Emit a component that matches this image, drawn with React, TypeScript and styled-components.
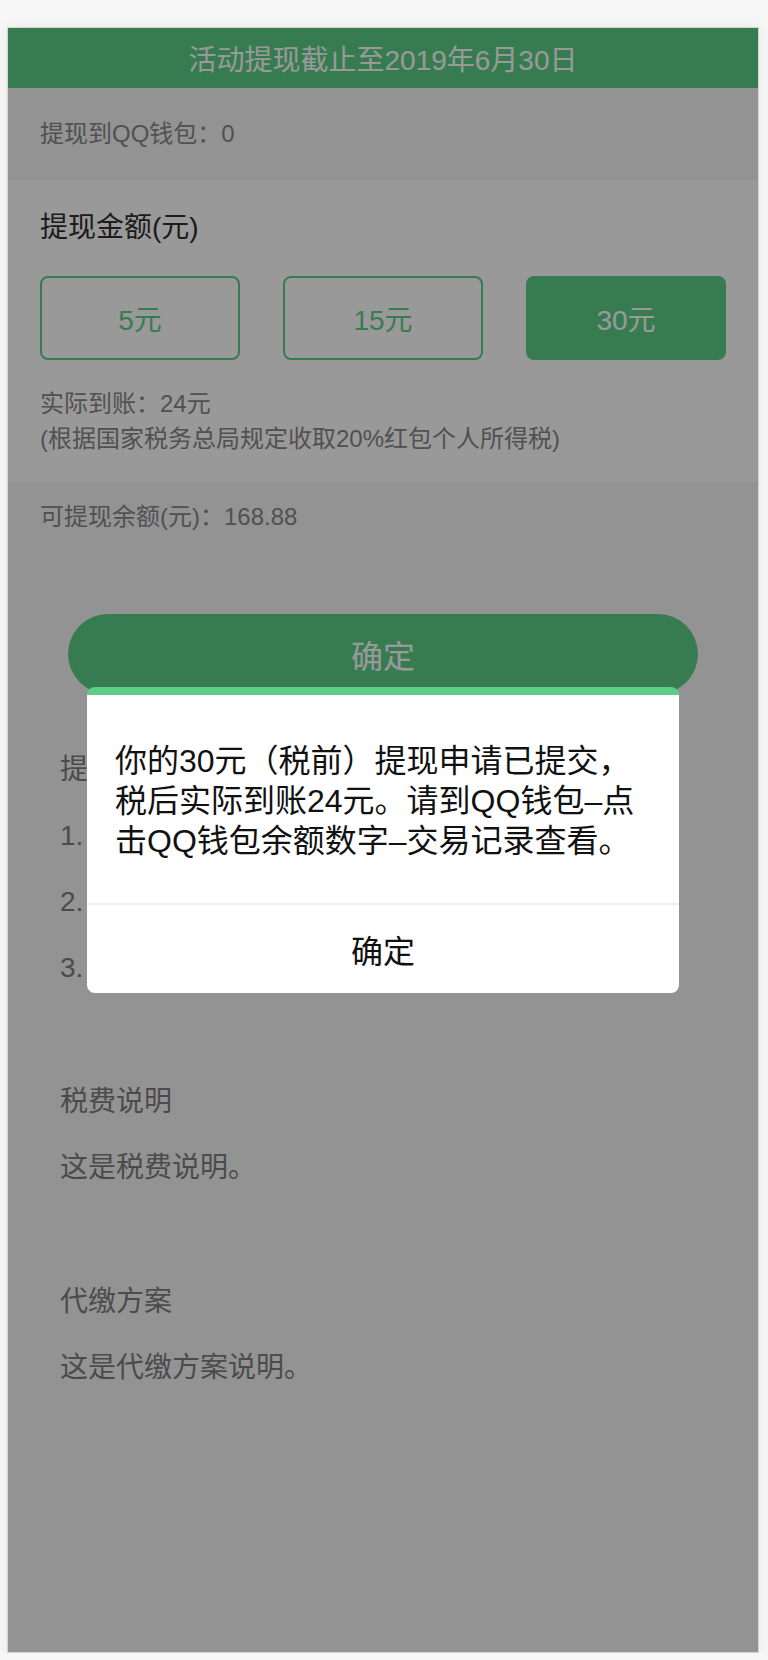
import React from "react";
import styled, { createGlobalStyle } from "styled-components";

const GREEN = "#5ccf87";

const GlobalStyle = createGlobalStyle`
  html, body {
    margin: 0;
    padding: 0;
    background: #f6f6f6;
  }
  body {
    font-family: "Liberation Sans", "Noto Sans CJK SC", sans-serif;
  }
  * { box-sizing: border-box; }
`;

const Page = styled.div`
  padding: 27px 0 0 7px;
`;

const Phone = styled.div`
  position: relative;
  width: 752px;
  height: 1626px;
  border: 1px solid #d3d3d3;
  background: #f5f5f5;
  overflow: hidden;
  box-shadow: 0 0 12px rgba(0, 0, 0, 0.06);
`;

const Banner = styled.div`
  height: 60px;
  background: ${GREEN};
  color: #fff;
  font-size: 28px;
  display: flex;
  align-items: center;
  justify-content: center;
`;

const InfoRow = styled.div`
  padding: 30px 32px;
  font-size: 24px;
  line-height: 32px;
  color: #878787;
`;

const AmountCard = styled.section`
  background: #fff;
  padding: 28px 32px 26px;
`;

const CardTitle = styled.div`
  font-size: 28px;
  line-height: 40px;
  color: #303030;
`;

const OptionRow = styled.div`
  display: flex;
  justify-content: space-between;
  margin: 28px 0 26px;
`;

const OptionButton = styled.button<{ $active?: boolean }>`
  width: 200px;
  height: 84px;
  border: 2px solid ${GREEN};
  border-radius: 8px;
  background: ${(p) => (p.$active ? GREEN : "transparent")};
  color: ${(p) => (p.$active ? "#fff" : GREEN)};
  font-family: inherit;
  font-size: 28px;
  padding: 0;
  display: flex;
  align-items: center;
  justify-content: center;
`;

const NoteText = styled.div`
  font-size: 24px;
  line-height: 35px;
  color: #878787;
`;

const BalanceRow = styled.div`
  padding: 15px 32px 0;
  font-size: 24px;
  line-height: 40px;
  color: #878787;
`;

const SubmitButton = styled.button`
  display: flex;
  align-items: center;
  justify-content: center;
  width: 630px;
  height: 80px;
  margin: 77px auto 0;
  border: none;
  border-radius: 40px;
  background: ${GREEN};
  color: #fff;
  font-family: inherit;
  font-size: 32px;
`;

const Notes = styled.div`
  padding: 56px 52px 0;
  display: flex;
  flex-direction: column;
  gap: 94px;
`;

const NoteGroup = styled.div`
  display: flex;
  flex-direction: column;
  gap: 26px;
`;

const NoteLine = styled.div`
  font-size: 28px;
  line-height: 40px;
  color: #7e7e7e;
`;

const Overlay = styled.div`
  position: absolute;
  inset: 0;
  background: rgba(0, 0, 0, 0.4);
  display: flex;
  align-items: center;
  justify-content: center;
`;

const Dialog = styled.div`
  width: 592px;
  background: #fff;
  border-top: 8px solid ${GREEN};
  border-radius: 8px;
  overflow: hidden;
`;

const DialogBody = styled.div`
  padding: 46px 28px 42px;
  font-size: 32px;
  line-height: 40px;
  color: #111;
`;

const DialogAction = styled.div`
  height: 90px;
  border-top: 2px solid #efefef;
  display: flex;
  align-items: center;
  justify-content: center;
  font-size: 32px;
  color: #111;
`;

const amounts = [
  { label: "5元", active: false },
  { label: "15元", active: false },
  { label: "30元", active: true },
];

export default function App() {
  return (
    <>
      <GlobalStyle />
      <Page>
        <Phone>
          <Banner>活动提现截止至2019年6月30日</Banner>
          <InfoRow>提现到QQ钱包：0</InfoRow>
          <AmountCard>
            <CardTitle>提现金额(元)</CardTitle>
            <OptionRow>
              {amounts.map((a) => (
                <OptionButton key={a.label} $active={a.active}>
                  {a.label}
                </OptionButton>
              ))}
            </OptionRow>
            <NoteText>实际到账：24元</NoteText>
            <NoteText>(根据国家税务总局规定收取20%红包个人所得税)</NoteText>
          </AmountCard>
          <BalanceRow>可提现余额(元)：168.88</BalanceRow>
          <SubmitButton>确定</SubmitButton>
          <Notes>
            <NoteGroup>
              <NoteLine>提现说明</NoteLine>
              <NoteLine>1. 每次可选择5元、15元或30元</NoteLine>
              <NoteLine>2. 提现将收取20%个人所得税</NoteLine>
              <NoteLine>3. 提现后请到QQ钱包查看</NoteLine>
            </NoteGroup>
            <NoteGroup>
              <NoteLine>税费说明</NoteLine>
              <NoteLine>这是税费说明。</NoteLine>
            </NoteGroup>
            <NoteGroup>
              <NoteLine>代缴方案</NoteLine>
              <NoteLine>这是代缴方案说明。</NoteLine>
            </NoteGroup>
          </Notes>
          <Overlay>
            <Dialog>
              <DialogBody>
                你的30元（税前）提现申请已提交，税后实际到账24元。请到QQ钱包–点击QQ钱包余额数字–交易记录查看。
              </DialogBody>
              <DialogAction>确定</DialogAction>
            </Dialog>
          </Overlay>
        </Phone>
      </Page>
    </>
  );
}
